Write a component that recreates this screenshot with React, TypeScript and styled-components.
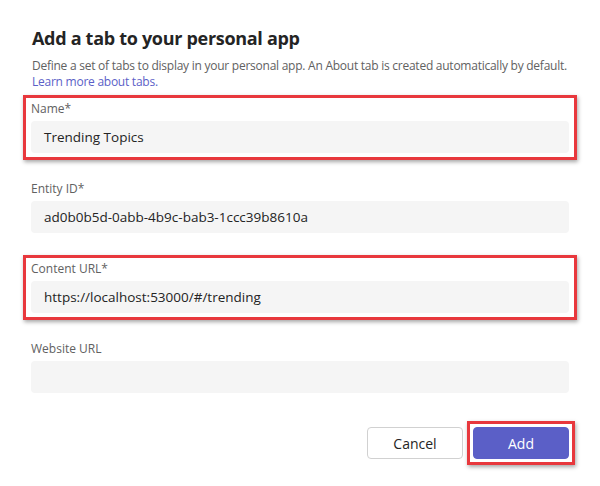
import styled, { createGlobalStyle } from 'styled-components';

const GlobalStyle = createGlobalStyle`
  html, body {
    margin: 0;
    padding: 0;
    background: #ffffff;
  }
  body {
    font-family: 'Open Sans', 'Noto Sans', sans-serif;
    color: #242424;
  }
`;

const Page = styled.div`
  width: 600px;
  height: 486px;
  box-sizing: border-box;
  padding: 24px 31px 0 31px;
  display: flex;
  flex-direction: column;
`;

const Title = styled.h1`
  margin: 0 0 6px 1px;
  font-size: 18px;
  line-height: 28px;
  font-weight: 700;
  letter-spacing: -0.3px;
  color: #242424;
`;

const Description = styled.p`
  margin: 0 0 5px 1px;
  font-size: 12px;
  line-height: 16px;
  letter-spacing: -0.25px;
  white-space: nowrap;
  color: #616161;
`;

const LearnLink = styled.a`
  color: #5b5fc7;
  text-decoration: none;
`;

const Fields = styled.div`
  display: flex;
  flex-direction: column;
  gap: 15px;
`;

const Field = styled.div<{ $highlighted?: boolean }>`
  margin: 0 -8px;
  padding: 3px 5px 4px;
  border: 3px solid ${p => (p.$highlighted ? '#e8383d' : 'transparent')};
  box-shadow: ${p => (p.$highlighted ? '1px 2px 4px rgba(0, 0, 0, 0.35)' : 'none')};
  display: flex;
  flex-direction: column;
  gap: 4px;
`;

const Label = styled.label`
  font-size: 12px;
  line-height: 16px;
  color: #616161;
`;

const Input = styled.div`
  height: 32px;
  box-sizing: border-box;
  padding: 0 13px;
  background: #f5f5f5;
  border-radius: 4px;
  display: flex;
  align-items: center;
  font-size: 13.5px;
  color: #242424;
`;

const Actions = styled.div`
  margin-top: 27px;
  display: flex;
  justify-content: flex-end;
  align-items: center;
  gap: 10px;
`;

const Button = styled.button<{ $primary?: boolean }>`
  width: 96px;
  height: 32px;
  border-radius: 4px;
  font-family: inherit;
  font-size: 14px;
  font-weight: ${p => (p.$primary ? 500 : 400)};
  background: ${p => (p.$primary ? '#5b5fc7' : '#ffffff')};
  color: ${p => (p.$primary ? '#ffffff' : '#242424')};
  border: 1px solid ${p => (p.$primary ? '#5b5fc7' : '#d1d1d1')};
  cursor: pointer;
`;

const Highlight = styled.span`
  display: inline-flex;
  margin: -6px;
  padding: 3px;
  border: 3px solid #e8383d;
  box-shadow: 1px 2px 4px rgba(0, 0, 0, 0.35);
`;

const fields = [
  { label: 'Name*', value: 'Trending Topics', highlighted: true },
  { label: 'Entity ID*', value: 'ad0b0b5d-0abb-4b9c-bab3-1ccc39b8610a', highlighted: false },
  { label: 'Content URL*', value: 'https://localhost:53000/#/trending', highlighted: true },
  { label: 'Website URL', value: '', highlighted: false },
];

export default function App() {
  return (
    <>
      <GlobalStyle />
      <Page>
        <Title>Add a tab to your personal app</Title>
        <Description>
          Define a set of tabs to display in your personal app. An About tab is created automatically by default.
          <br />
          <LearnLink href="#">Learn more about tabs.</LearnLink>
        </Description>
        <Fields>
          {fields.map(f => (
            <Field key={f.label} $highlighted={f.highlighted}>
              <Label>{f.label}</Label>
              <Input>{f.value}</Input>
            </Field>
          ))}
        </Fields>
        <Actions>
          <Button>Cancel</Button>
          <Highlight>
            <Button $primary>Add</Button>
          </Highlight>
        </Actions>
      </Page>
    </>
  );
}
